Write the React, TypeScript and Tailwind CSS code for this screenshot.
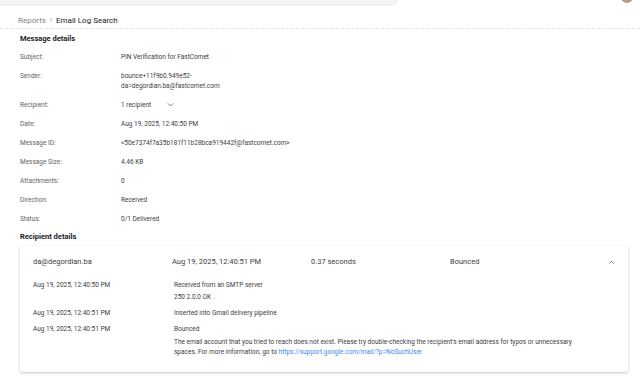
import React from 'react';

const rows: { label: string; value: React.ReactNode }[] = [
  { label: 'Subject:', value: 'PIN Verification for FastComet' },
  {
    label: 'Sender:',
    value: (
      <>
        bounce+11f9b0.949e52-
        <br />
        da=degordian.ba@fastcomet.com
      </>
    ),
  },
  {
    label: 'Recipient:',
    value: (
      <span className="flex items-center">
        1 recipient
        <svg width="9" height="9" viewBox="0 0 24 24" className="ml-[15px] text-[#5f6368]">
          <path d="M5 9l7 7 7-7" fill="none" stroke="currentColor" strokeWidth="2.2" />
        </svg>
      </span>
    ),
  },
  { label: 'Date:', value: 'Aug 19, 2025, 12:40:50 PM' },
  { label: 'Message ID:', value: '<50e7374f7a35b181f11b28bca919442f@fastcomet.com>' },
  { label: 'Message Size:', value: '4.46 KB' },
  { label: 'Attachments:', value: '0' },
  { label: 'Direction:', value: 'Received' },
  { label: 'Status:', value: '0/1 Delivered' },
];

const events: { time: string; lines: React.ReactNode[] }[] = [
  { time: 'Aug 19, 2025, 12:40:50 PM', lines: ['Received from an SMTP server', '250 2.0.0 OK'] },
  { time: 'Aug 19, 2025, 12:40:51 PM', lines: ['Inserted into Gmail delivery pipeline'] },
];

export default function App() {
  return (
    <div className="w-[640px] h-[386px] bg-white overflow-hidden text-[#3c4043]" style={{ fontFamily: 'Roboto, "Liberation Sans", sans-serif' }}>
      {/* top bar */}
      <div className="h-[6px] flex justify-between">
        <div className="w-[398px] h-[6px] bg-[#f1f3f4] rounded-br-[6px]" />
        <div className="w-[12px] h-[12px] -mt-[9px] mr-[7px] rounded-full bg-[#b89a86]" />
      </div>

      {/* breadcrumb */}
      <div className="h-[23px] border-b border-dashed border-[#e3e3e3] flex items-center pl-[18px] text-[8px] pt-[7px]">
        <span className="text-[#80868b]">Reports</span>
        <span className="text-[#80868b] mx-[4px] text-[7px]">›</span>
        <span className="text-[#202124]">Email Log Search</span>
      </div>

      <div className="pl-[20px] pr-[12px]">
        <div className="h-[15px] flex items-end text-[7.5px] font-bold text-[#202124] leading-[10px]">Message details</div>
        <div className="pt-[3px]">
          {rows.map((r) => (
            <div key={r.label} className="flex py-[4.5px] text-[6.5px] leading-[10px]">
              <div className="w-[101px] text-[#5f6368]">{r.label}</div>
              <div className="flex-1">{r.value}</div>
            </div>
          ))}
        </div>

        <div className="h-[14px] flex items-end text-[7.5px] font-bold text-[#202124] leading-[10px]">Recipient details</div>

        <div className="mt-[4px] w-[608px] rounded-[2px] bg-white shadow-[0_1px_3px_rgba(60,64,67,0.3)] pl-[13px] pr-[12px] pb-[13px]">
          <div className="h-[31px] flex items-center text-[7.5px] text-[#3c4043] pt-[1px]">
            <div className="w-[139px]">da@degordian.ba</div>
            <div className="w-[139px]">Aug 19, 2025, 12:40:51 PM</div>
            <div className="w-[139px]">0.37 seconds</div>
            <div className="flex-1">Bounced</div>
            <svg width="9" height="9" viewBox="0 0 24 24" className="text-[#5f6368]">
              <path d="M6 15l6-6 6 6" fill="none" stroke="currentColor" strokeWidth="2.4" />
            </svg>
          </div>
          <div className="text-[6.5px] leading-[12px]">
            {events.map((e, i) => (
              <div key={i} className="flex py-[2px]">
                <div className="w-[141px]">{e.time}</div>
                <div className="flex-1">
                  {e.lines.map((l, j) => (
                    <div key={j}>{l}</div>
                  ))}
                </div>
              </div>
            ))}
            <div className="flex py-[2px]">
              <div className="w-[141px]">Aug 19, 2025, 12:40:51 PM</div>
              <div className="flex-1">
                <div>Bounced</div>
                <p className="mt-[2px] leading-[10px] max-w-[410px]">
                  The email account that you tried to reach does not exist. Please try double-checking the recipient's email address for typos or unnecessary spaces. For more information, go to <a className="text-[#4285f4]">https://support.google.com/mail/?p=NoSuchUser</a>
                </p>
              </div>
            </div>
          </div>
        </div>
      </div>
    </div>
  );
}
